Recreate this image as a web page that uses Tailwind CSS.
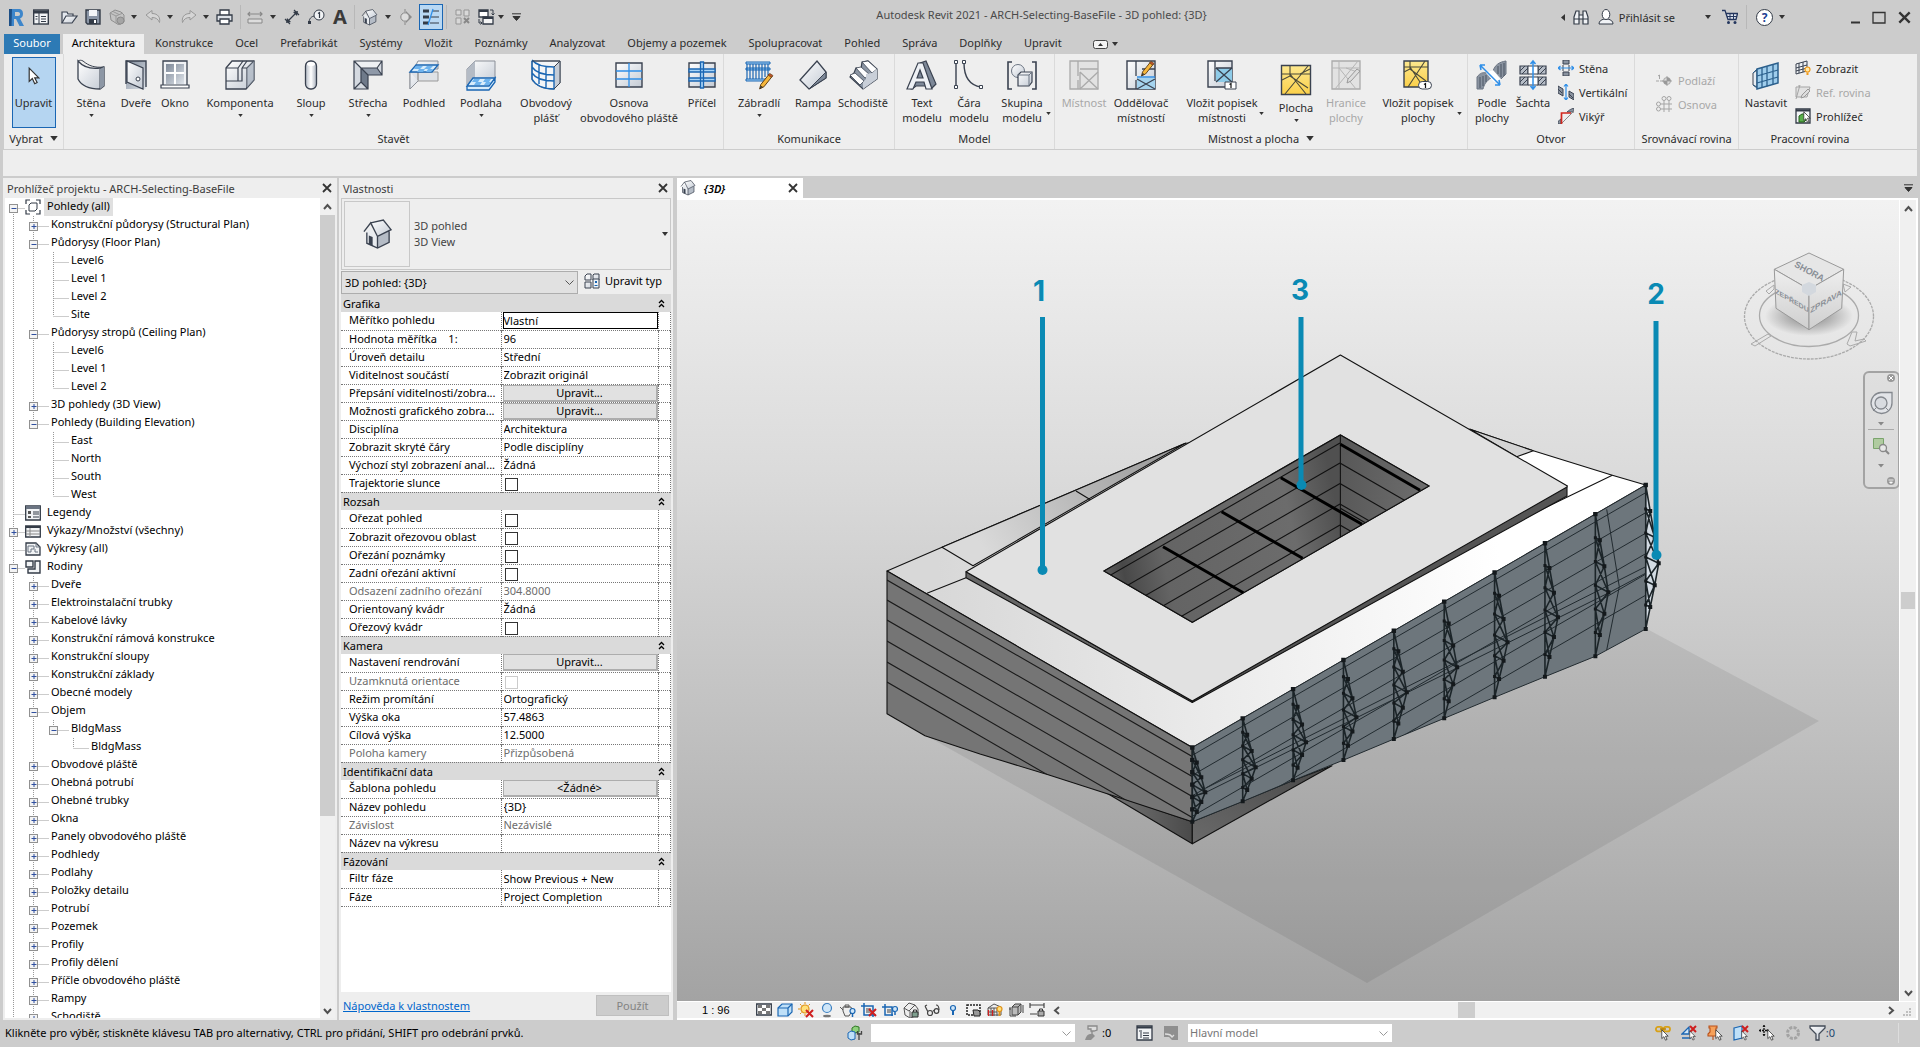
<!DOCTYPE html>
<html lang="cs">
<head>
  <meta charset="UTF-8" />
  <meta name="viewport" content="width=device-width, initial-scale=1.0"/>
  <title>Autodesk Revit 2021</title>
  <script src="https://cdn.jsdelivr.net/npm/@tailwindcss/browser@4"></script>
</head>
<body class="h-screen flex flex-col overflow-hidden bg-[#cccccc] text-[#2b2b2b] text-[11px] leading-[15px] font-['Noto_Sans','Open_Sans',sans-serif]">

<!-- Shared gradients and small glyphs -->
<svg class="absolute w-0 h-0" aria-hidden="true">
  <defs>
    <linearGradient id="light" x1="0" y1="0" x2="1" y2="1"><stop offset="0" stop-color="#fff"/><stop offset="1" stop-color="#c3cad4"/></linearGradient>
    <linearGradient id="steel" x1="0" y1="0" x2="1" y2="1"><stop offset="0" stop-color="#7d8898"/><stop offset="1" stop-color="#dfe4ea"/></linearGradient>
    <linearGradient id="tube" x1="0" y1="0" x2="1" y2="0"><stop offset="0" stop-color="#b4bbc6"/><stop offset=".5" stop-color="#fff"/><stop offset="1" stop-color="#a9b1bd"/></linearGradient>
    <linearGradient id="yellow" x1="0" y1="0" x2="0" y2="1"><stop offset="0" stop-color="#fde88f"/><stop offset="1" stop-color="#fbd04a"/></linearGradient>
    <symbol id="down" viewBox="0 0 6 4"><path d="M0 0h6L3 4z" fill="#333"/></symbol>
    <symbol id="cross" viewBox="0 0 10 10"><path d="M1 1l8 8M9 1l-8 8" stroke="#333" stroke-width="1.8"/></symbol>
    <symbol id="pointer" viewBox="0 0 10 15"><path d="M1 1v11l2.600-2.400L5.600 14l2-1-2-4H9z" fill="#fff" stroke="#333"/></symbol>
    <symbol id="pencil" viewBox="0 0 14 16"><path d="M1 15l1-4 8-10 3 2-8 10z" fill="#f6b73c" stroke="#5a3a10" stroke-width=".9"/><path d="M9 2l3 2 1.500-1.700L10.500 .4z" fill="#c2542d" stroke="#5a3a10" stroke-width=".6"/><path d="M1 15l1-3 2 1z" fill="#333"/></symbol>
    <symbol id="house" viewBox="0 0 32 32"><path d="M5 13v12l11 5V18L8 9z" fill="#e9ecf0"/><path d="M16 18v12l12-6V12z" fill="#b5bcc6"/><path d="M9 4l13-3 8 10-14 7z" fill="url(#light)"/><path d="M2 13l7-9 7 14 14-7-8-10L9 4M5 14v11l11 5 12-6V13M16 18v12" fill="none" stroke="#3a4250" stroke-width="1.400"/><path d="M7 26v-9l4 1.500V28z" fill="#3a4250"/></symbol>
  </defs>
</svg>

<!-- Title bar -->
<header class="h-[34px] shrink-0 flex items-center pl-[9px] pr-[9px] relative">
  <div class="flex items-center">
    <svg class="w-4 h-[19px]" viewBox="0 0 16 19"><path d="M0 1h4v17H0z" fill="#1d4f86"/><path d="M3 1h6c4 0 5 2 5 5s-2 4-3 4.500L15 18h-4.500L7 11H5v7H2.500z" fill="#3d86cb"/><path d="M6 4h3c1.500 0 2 1 2 2s-.5 2-2 2H6z" fill="#ccc"/></svg>
    <button class="ml-2" aria-label="Vlastnosti"><svg class="w-4 h-4" viewBox="0 0 16 16"><rect x=".7" y="1" width="14.600" height="14" fill="#f2f4f6" stroke="#333b47" stroke-width="1.400"/><path d="M1 3h14" stroke="#333b47" stroke-width="3"/><path d="M6 4v11M8 7.500h5M8 10h5M8 12.500h5M2.500 7.500h2M2.500 10h2" stroke="#333b47"/></svg></button>
    <button class="ml-3" aria-label="Otevřít"><svg class="w-[17px] h-4" viewBox="0 0 17 16"><path d="M1 14V3h5l1 2h5v2" fill="#e4e8ee" stroke="#3a4250" stroke-width="1.200"/><path d="M1 14l4-7h11l-5 7z" fill="url(#light)" stroke="#3a4250" stroke-width="1.200"/></svg></button>
    <button class="ml-[7px]" aria-label="Uložit"><svg class="w-4 h-4" viewBox="0 0 16 16"><path d="M1 1h14v14H2.500L1 13.500z" fill="#8a95a6" stroke="#333b47" stroke-width="1.400"/><path d="M4 1h8v6H4z" fill="#f3f5f8"/><path d="M4 10h8v5H4z" fill="#333b47"/><path d="M9 11h2v3H9z" fill="#fff"/></svg></button>
    <button class="ml-2" aria-label="Synchronizovat"><svg class="w-4 h-4" viewBox="0 0 16 16"><path d="M1 4l5-3 6 2 3 3v7l-5 3-8-5z" fill="#c3c3c3" stroke="#8e8e8e"/><path d="M1 4l6 3v7M7 7l7-3M4 2.500l6 3" stroke="#999" fill="none"/><circle cx="11.500" cy="11.500" r="3.500" fill="#a5a5a5" stroke="#8a8a8a"/></svg></button>
    <svg class="ml-[6px] w-[6px] h-1"><use href="#down"/></svg>
    <button class="ml-2" aria-label="Zpět"><svg class="w-4 h-4" viewBox="0 0 16 16"><path d="M1 6l6-4.500V4.500c6 0 8.500 4 7.500 9C13 10 11 8.500 7 8.500v2.500z" fill="#d5d5d5" stroke="#999"/></svg></button>
    <svg class="ml-[6px] w-[6px] h-1"><use href="#down"/></svg>
    <button class="ml-2" aria-label="Znovu"><svg class="w-4 h-4" viewBox="0 0 16 16"><path d="M15 6L9 1.500V4.500C3 4.500 .5 8.500 1.500 13.500 3 10 5 8.500 9 8.500V11z" fill="#d5d5d5" stroke="#999"/></svg></button>
    <svg class="ml-[6px] w-[6px] h-1"><use href="#down"/></svg>
    <button class="ml-[7px]" aria-label="Tisk"><svg class="w-[17px] h-4" viewBox="0 0 17 16"><path d="M4 1h9v6H4z" fill="#fff" stroke="#333b47" stroke-width="1.300"/><path d="M1 6h15v6H1z" fill="#dde1e7" stroke="#333b47" stroke-width="1.300"/><path d="M4 10h9v5H4z" fill="#fff" stroke="#333b47" stroke-width="1.300"/></svg></button>
    <span class="ml-[7px] w-px h-6 bg-[#b8b8b8]"></span>
    <button class="ml-[6px]" aria-label="Měřit"><svg class="w-4 h-4" viewBox="0 0 16 16"><path d="M1 5h14M3 3L1 5l2 2M13 3l2 2-2 2" fill="none" stroke="#888" stroke-width="1.200"/><path d="M1 10h14v4H1z" fill="#ddd" stroke="#888"/></svg></button>
    <svg class="ml-[7px] w-[6px] h-1"><use href="#down"/></svg>
    <button class="ml-2" aria-label="Kóta"><svg class="w-4 h-4" viewBox="0 0 16 16"><path d="M3 13L13 3M1 10l5 5M10 1l5 5" stroke="#333b47" stroke-width="1.200"/><path d="M2 14l1-5 4 4zM14 2l-5 1 4 4z" fill="#333b47"/></svg></button>
    <button class="ml-2" aria-label="Popisek"><svg class="w-[17px] h-4" viewBox="0 0 17 16"><path d="M1 14c0-3 1-6 5-7" fill="none" stroke="#333b47"/><path d="M0 12h3v3H0z" fill="#333b47"/><circle cx="11" cy="6" r="5" fill="#f2f4f6" stroke="#333b47"/><path d="M10 4.500l1.500-1V9" fill="none" stroke="#333b47" stroke-width="1.200"/></svg></button>
    <button class="ml-2 w-[14px] text-[20px] leading-[20px] font-bold text-[#3a3a3a]">A</button>
    <span class="ml-[7px] w-px h-6 bg-[#b8b8b8]"></span>
    <button class="ml-[6px]" aria-label="Výchozí 3D pohled"><svg class="w-[17px] h-[17px]"><use href="#house"/></svg></button>
    <svg class="ml-[7px] w-[6px] h-1"><use href="#down"/></svg>
    <button class="ml-2" aria-label="Řez"><svg class="w-[14px] h-4" viewBox="0 0 14 16"><path d="M7 2l6 6-6 6z" fill="#8b8b8b"/><circle cx="6" cy="8" r="4.200" fill="#ddd" stroke="#888"/><path d="M6 0v3M6 13v3" stroke="#888"/></svg></button>
    <button class="ml-[6px] w-6 h-[26px] bg-[#b9d8f3] border border-[#1a66b3] flex items-center justify-center" aria-label="Tenké čáry"><svg class="w-[18px] h-[18px]" viewBox="0 0 18 18"><path d="M1 3h6M1 9h6M1 15h6" stroke="#333b47" stroke-width="3"/><path d="M10 3h7M9 9h8M8 15h9" stroke="#333b47"/><path d="M11 1L6 17" stroke="#2f8fe8" stroke-width="1.300"/></svg></button>
    <span class="ml-[3px] w-px h-6 bg-[#b8b8b8]"></span>
    <button class="ml-2" aria-label="Zavřít neaktivní"><svg class="w-4 h-4" viewBox="0 0 16 16"><path d="M1 1h5v5H1zM9 1h5v6H9zM1 9h5v6H1z" fill="#d8d8d8" stroke="#959595"/><path d="M9 9l5 5M14 9l-5 5" stroke="#888" stroke-width="2"/></svg></button>
    <button class="ml-[6px]" aria-label="Přepnout okna"><svg class="w-[18px] h-[18px]" viewBox="0 0 18 18"><path d="M2 2h9v7H2z" fill="#fff" stroke="#333b47" stroke-width="1.300"/><path d="M6 9h10v7H6z" fill="#f4f4f4" stroke="#333b47" stroke-width="1.300"/><path d="M6 10h10M2 3h9" stroke="#333b47" stroke-width="2"/><path d="M13 2h3v5M14.500 5.500L16 7l1.500-1.500M2 11v4h3M3.500 13.500L5 15l-1.500 1.500" fill="none" stroke="#333b47"/></svg></button>
    <svg class="ml-[3px] w-[6px] h-1"><use href="#down"/></svg>
    <svg class="ml-[8px] w-[9px] h-2" viewBox="0 0 9 8"><path d="M0 .8h9M1 3.500h7L4.500 7.500z" fill="#333" stroke="#333"/></svg>
  </div>
  <h1 class="absolute inset-x-0 top-[7px] pl-[163px] text-center whitespace-nowrap text-[#4a4a4a]">Autodesk Revit 2021 - ARCH-Selecting-BaseFile - 3D pohled: {3D}</h1>
  <div class="relative flex items-center ml-auto">
    <svg class="w-1 h-[7px]" viewBox="0 0 4 7"><path d="M4 0v7L0 3.500z" fill="#333"/></svg>
    <button class="ml-2" aria-label="Hledat"><svg class="w-4 h-4" viewBox="0 0 16 16"><path d="M1 8l2-6h3v13H1zM15 8l-2-6h-3v13h5zM6 6h4v4H6z" fill="#f0f2f5" stroke="#333b47" stroke-width="1.200"/><path d="M1 10h5M10 10h5" stroke="#333b47"/></svg></button>
    <button class="ml-[9px] flex items-center gap-[5px]"><svg class="w-4 h-4" viewBox="0 0 16 16"><path d="M1 15c0-3 2-4 5-5h4c3 1 5 2 5 5z" fill="#f0f2f5" stroke="#333b47"/><ellipse cx="8" cy="5.500" rx="3.800" ry="5" fill="#fff" stroke="#333b47"/></svg>Přihlásit se</button>
    <svg class="ml-[30px] w-[6px] h-1"><use href="#down"/></svg>
    <button class="ml-[10px]" aria-label="Obchod"><svg class="w-[17px] h-4" viewBox="0 0 17 16"><path d="M1 1.500h3l3 9h8l1.500-6H5" fill="#dfe5ef" stroke="#24365e" stroke-width="1.300"/><path d="M6 7.500h10M9 5v5M12.500 5v5" stroke="#24365e"/><circle cx="7.500" cy="13.500" r="1.500" fill="#24365e"/><circle cx="14" cy="13.500" r="1.500" fill="#24365e"/></svg></button>
    <span class="ml-2 w-px h-6 bg-[#b8b8b8]"></span>
    <button class="ml-[9px] w-[17px] h-[17px] rounded-full border border-[#333b47] bg-white text-[#1c3f94] font-bold text-[12px] leading-[15px]">?</button>
    <svg class="ml-[6px] w-[6px] h-1"><use href="#down"/></svg>
    <button class="ml-[66px]" aria-label="Minimalizovat"><svg class="w-[9px] h-[13px]" viewBox="0 0 9 13"><path d="M0 11.500h9" stroke="#333" stroke-width="2"/></svg></button>
    <button class="ml-3" aria-label="Maximalizovat"><svg class="w-[14px] h-[13px]" viewBox="0 0 14 13"><path d="M1 1.500h12v10.500H1z" fill="none" stroke="#333" stroke-width="1.300"/></svg></button>
    <button class="ml-3" aria-label="Zavřít"><svg class="w-[13px] h-[13px]"><use href="#cross"/></svg></button>
  </div>
</header>

<!-- Ribbon tabs -->
<nav class="h-5 shrink-0 flex items-stretch pl-1 leading-[18px] whitespace-nowrap">
  <button class="w-14 pb-[2px] bg-[#2d7ab5] text-white">Soubor</button>
  <button class="ml-[3px] w-[81px] pb-[2px] bg-[#eeeeee] text-black">Architektura</button>
  <button class="px-[11px] pb-[2px]">Konstrukce</button>
  <button class="px-[11px] pb-[2px]">Ocel</button>
  <button class="px-[11px] pb-[2px]">Prefabrikát</button>
  <button class="px-[11px] pb-[2px]">Systémy</button>
  <button class="px-[11px] pb-[2px]">Vložit</button>
  <button class="px-[11px] pb-[2px]">Poznámky</button>
  <button class="px-[11px] pb-[2px]">Analyzovat</button>
  <button class="px-[11px] pb-[2px]">Objemy a pozemek</button>
  <button class="px-[11px] pb-[2px]">Spolupracovat</button>
  <button class="px-[11px] pb-[2px]">Pohled</button>
  <button class="px-[11px] pb-[2px]">Správa</button>
  <button class="px-[11px] pb-[2px]">Doplňky</button>
  <button class="px-[11px] pb-[2px]">Upravit</button>
  <button class="ml-5 flex items-center gap-1" aria-label="Minimalizovat pás karet"><svg class="w-[15px] h-[9px]" viewBox="0 0 15 9"><rect x=".5" y=".5" width="14" height="8" rx="2" fill="#f4f4f4" stroke="#444"/><path d="M5 6h5L7.500 3z" fill="#333"/></svg><svg class="w-[6px] h-1"><use href="#down"/></svg></button>
</nav>

<!-- Ribbon -->
<section class="h-[95px] shrink-0 ml-1 mr-[3px] bg-[#eeeeee] flex whitespace-nowrap">
  <div class="w-[60px] flex flex-col items-center border-r border-[#dadada]">
    <button class="mt-[3px] w-11 h-[71px] flex flex-col items-center bg-[#b5d5f1] border border-[#1a66b3]">
      <svg class="mt-2 w-3 h-5"><use href="#pointer"/></svg>
      <span class="mt-[9px]">Upravit</span>
    </button>
    <div class="mt-auto pb-[3px] flex items-center gap-[7px]">Vybrat <svg class="w-2 h-[5px]"><use href="#down"/></svg></div>
  </div>

  <div class="w-[660px] flex flex-col border-r border-[#dadada]">
    <div class="flex pl-1 pt-[5px]">
      <button class="w-[46px] flex flex-col items-center gap-1">
        <svg class="w-8 h-8" viewBox="0 0 32 32"><path d="M3 2c6 7 14 8 22 7l4-1v19l-4 3C14 30 6 26 3 20z" fill="url(#light)" stroke="#3a4250" stroke-width="1.300"/><path d="M3 2c2-1 3-1 5 0 6 5 12 7 21 6l-4 2v20" fill="none" stroke="#3a4250"/><path d="M25 10l4-2v19l-4 3z" fill="#8d97a5"/></svg>
        <span>Stěna</span><svg class="w-[5px] h-[3px]"><use href="#down"/></svg>
      </button>
      <button class="w-11 flex flex-col items-center gap-1">
        <svg class="w-8 h-8" viewBox="0 0 32 32"><path d="M6 2h20v28H6z" fill="url(#steel)"/><path d="M6 25V2h20v26" fill="none" stroke="#3a4250" stroke-width="1.400"/><path d="M7 2l16 7v21L7 23z" fill="url(#light)" stroke="#3a4250" stroke-width="1.200"/><circle cx="18" cy="20" r="2" fill="#fff" stroke="#3a4250"/></svg>
        <span>Dveře</span>
      </button>
      <button class="w-[34px] flex flex-col items-center gap-1">
        <svg class="w-8 h-8" viewBox="0 0 32 32"><path d="M4 2h24v25H4z" fill="#f0f2f5" stroke="#3a4250" stroke-width="1.300"/><path d="M7 5h18v20H7z" fill="url(#steel)"/><path d="M16 4v22M7 14h18" stroke="#fff" stroke-width="2"/><path d="M2 26h28v3H2z" fill="#fff" stroke="#3a4250" stroke-width="1.200"/></svg>
        <span>Okno</span>
      </button>
      <button class="w-[96px] flex flex-col items-center gap-1">
        <svg class="w-8 h-8" viewBox="0 0 32 32"><path d="M2 9l6-7h22v19l-8 9H2z" fill="url(#light)" stroke="#3a4250" stroke-width="1.300"/><path d="M2 9h12v13H2M14 9l5-7M18 9l5-7M18 9v13h-4M18 9h5v20M23 9l7-7" fill="none" stroke="#3a4250" stroke-width="1.200"/><path d="M23 9l7-7v19l-7 8z" fill="#a4adba" opacity=".6"/></svg>
        <span>Komponenta</span><svg class="w-[5px] h-[3px]"><use href="#down"/></svg>
      </button>
      <button class="w-[46px] flex flex-col items-center gap-1">
        <svg class="w-8 h-8" viewBox="0 0 32 32"><rect x="10.500" y="2" width="11" height="28" rx="5" fill="url(#tube)" stroke="#3a4250" stroke-width="1.300"/><ellipse cx="16" cy="5" rx="4" ry="2" fill="#fff"/></svg>
        <span>Sloup</span><svg class="w-[5px] h-[3px]"><use href="#down"/></svg>
      </button>
      <button class="w-[68px] flex flex-col items-center gap-1">
        <svg class="w-8 h-8" viewBox="0 0 32 32"><path d="M2 2h28v14H16v14H2z" fill="#d4d9e0"/><path d="M2 2l7 7h16l5-7z" fill="#eef0f3"/><path d="M9 9h16l5 7H16z" fill="#8f99a8"/><path d="M9 9v14l7 7V16z" fill="#6f7a8a"/><path d="M2 2h28v14H16v14H2zM2 2l14 14M9 9h16l5-7M25 9l5 7M9 9v14l-7 7M9 23l7 7" fill="none" stroke="#3a4250" stroke-width="1.200"/></svg>
        <span>Střecha</span><svg class="w-[5px] h-[3px]"><use href="#down"/></svg>
      </button>
      <button class="w-11 flex flex-col items-center gap-1">
        <svg class="w-8 h-8" viewBox="0 0 32 32"><path d="M2 13v17l8-8V13zM10 13h20v9H10z" fill="#dfe2e6" stroke="#999"/><path d="M2 13v17l8-8M10 2h20v8H6z" fill="url(#light)" stroke="#8a8f98"/><path d="M2 13l6-7h22l-6 7z" fill="#d8ecfb" stroke="#1a66b3" stroke-width="1.300"/><path d="M8 7h7l-3 3H6zM19 7h6l-3 3h-6zM11 10h6l-2 3H9zM20 10h5l-2 3h-5z" fill="#6db3ee"/></svg>
        <span>Podhled</span>
      </button>
      <button class="w-[70px] flex flex-col items-center gap-1">
        <svg class="w-8 h-8" viewBox="0 0 32 32"><path d="M2 26V10l8-8h20v18l-6 6z" fill="url(#light)" stroke="#8a8f98"/><path d="M2 26V10l8-8v17z" fill="#b4bbc5"/><path d="M2 27l6-8h22l-6 8zv4h22l6-8v-4l-6 8" fill="#d8ecfb" stroke="#1a66b3" stroke-width="1.300"/><path d="M9 20h6l-2 3H7zM20 20h6l-2 3h-6zM11 23h6l-2 3H9zM21 23h5l-2 3h-5z" fill="#6db3ee"/></svg>
        <span>Podlaha</span><svg class="w-[5px] h-[3px]"><use href="#down"/></svg>
      </button>
      <button class="w-[60px] flex flex-col items-center gap-1">
        <svg class="w-8 h-8" viewBox="0 0 32 32"><path d="M2 2h28v22l-6 6C14 30 6 27 2 21z" fill="#f3f5f7" stroke="#555e6c"/><path d="M24 8l6-6v22l-6 6z" fill="#c5ccd6"/><path d="M2 2v18c4 7 12 10 22 10V8C14 8 6 6 2 1M2 8c4 6 12 8 22 8M2 14c4 6 12 8 22 8M9 6v19M16 7.500v21" fill="none" stroke="#1a66b3" stroke-width="1.400"/><path d="M24 8l6-6v22l-6 6M2 2h28" fill="none" stroke="#3a4250"/></svg>
        <span class="text-center">Obvodový<br>plášť</span>
      </button>
      <button class="w-[106px] flex flex-col items-center gap-1">
        <svg class="w-8 h-8" viewBox="0 0 32 32"><path d="M3 4h26v24H3z" fill="url(#light)" stroke="#3a4250" stroke-width="1.400"/><path d="M3 12h26M3 20h26M16 4v24" stroke="#2f8fe8" stroke-width="1.300"/></svg>
        <span class="text-center">Osnova<br>obvodového pláště</span>
      </button>
      <button class="w-10 flex flex-col items-center gap-1">
        <svg class="w-8 h-8" viewBox="0 0 32 32"><path d="M3 4h26v24H3z" fill="url(#light)" stroke="#3a4250" stroke-width="1.400"/><path d="M3 10h26v3H3zM3 19h26v3H3zM14.500 3h3v26h-3z" fill="#a8d4f7" stroke="#1a66b3" stroke-width="1.300"/></svg>
        <span>Příčel</span>
      </button>
    </div>
    <div class="mt-auto pb-[3px] text-center">Stavět</div>
  </div>

  <div class="w-[171px] flex flex-col border-r border-[#dadada]">
    <div class="flex pl-[5px] pt-[5px]">
      <button class="w-[60px] flex flex-col items-center gap-1">
        <svg class="w-8 h-8" viewBox="0 0 32 32"><path d="M3 3h24v2H3zM3 9h24v2H3zM3 20h20v2H3z" fill="#a8d4f7" stroke="#1a66b3"/><path d="M4 5v15M7 5v15M10 5v15M13 5v15M16 5v15M19 5v15M22 5v13M25 5v11" stroke="#1a66b3" stroke-width="1.200"/><use href="#pencil" x="15" y="14" width="16" height="17"/></svg>
        <span>Zábradlí</span><svg class="w-[5px] h-[3px]"><use href="#down"/></svg>
      </button>
      <button class="w-12 flex flex-col items-center gap-1">
        <svg class="w-8 h-8" viewBox="0 0 32 32"><path d="M3 21L20 2l9 11v6L12 30z" fill="url(#light)" stroke="#3a4250" stroke-width="1.300"/><path d="M12 30l17-17v6z" fill="#7d8898" stroke="#3a4250"/></svg>
        <span>Rampa</span>
      </button>
      <button class="w-[52px] flex flex-col items-center gap-1">
        <svg class="w-8 h-8" viewBox="0 0 32 32"><path d="M15 3l6-1 9 8v10L16 30 3 18l4-4 2-5 5 1z" fill="#8d97a5" stroke="#3a4250" stroke-width="1.200"/><path d="M15 3l6-1 9 8-5 4zM9 9l5-1 9 8-5 3zM3 16l5-2 9 8-4 4z" fill="#fff" stroke="#3a4250" stroke-width=".8"/><path d="M25 14l5-4v10L16 30v-7l3-3v-5z" fill="#c9cfd8"/></svg>
        <span>Schodiště</span>
      </button>
    </div>
    <div class="mt-auto pb-[3px] text-center">Komunikace</div>
  </div>

  <div class="w-[160px] flex flex-col border-r border-[#dadada]">
    <div class="flex pl-1 pt-[5px]">
      <button class="w-[46px] flex flex-col items-center gap-1">
        <svg class="w-8 h-8" viewBox="0 0 32 32"><path d="M14 4l6-2 10 23-4 4-6-2-10 0-4 3-4-1z" fill="#7d8898" stroke="#3a4250" stroke-width="1.200"/><path d="M12 4h5l9 26h-6l-2-7h-8l-3 7H1zM14 11l-3 8h6z" fill="#eef1f5" stroke="#3a4250" stroke-width="1.200" fill-rule="evenodd"/></svg>
        <span class="text-center">Text<br>modelu</span>
      </button>
      <button class="w-12 flex flex-col items-center gap-1">
        <svg class="w-8 h-8" viewBox="0 0 32 32"><path d="M3 4v24M11 4c0 12 4 22 17 24" fill="none" stroke="#3a4250" stroke-width="1.400"/><path d="M1.500 1.500h3v3h-3zM1.500 26.500h3v3h-3zM9.500 1.500h3v3h-3zM26.500 26.500h3v3h-3z" fill="#fff" stroke="#3a4250"/></svg>
        <span class="text-center">Čára<br>modelu</span>
      </button>
      <button class="relative w-[58px] flex flex-col items-center gap-1">
        <svg class="w-8 h-8" viewBox="0 0 32 32"><path d="M6 3H2v27h4M26 3h4v27h-4" fill="none" stroke="#3a4250" stroke-width="1.600"/><circle cx="12" cy="12" r="6.500" fill="url(#light)" stroke="#6b7482"/><path d="M12 16l3-3h11v10l-3 4H12z" fill="url(#light)" stroke="#3a4250" stroke-width="1.200"/><path d="M12 16h11v11M23 16l3-3" fill="none" stroke="#6b7482"/></svg>
        <span class="text-center">Skupina<br>modelu</span><svg class="absolute right-0 bottom-[10px] w-[5px] h-[3px]"><use href="#down"/></svg>
      </button>
    </div>
    <div class="mt-auto pb-[3px] text-center">Model</div>
  </div>

  <div class="w-[413px] flex flex-col border-r border-[#dadada]">
    <div class="flex pl-[6px] pt-[5px]">
      <button class="w-[46px] flex flex-col items-center gap-1 text-[#a8a8a8]" disabled>
        <svg class="w-8 h-8" viewBox="0 0 32 32"><path d="M2 2h28v28H2z" fill="#e2e2e2" stroke="#aaa" stroke-width="1.300"/><path d="M10 2v15M10 21v9M12 10h18M12 13v17M12 13l18 17M30 13L12 30" fill="none" stroke="#aaa" stroke-width="1.300"/></svg>
        <span>Místnost</span>
      </button>
      <button class="w-[68px] flex flex-col items-center gap-1">
        <svg class="w-8 h-8" viewBox="0 0 32 32"><path d="M2 2h28v28H2z" fill="url(#light)" stroke="#3a4250" stroke-width="1.400"/><path d="M12 19h18v11H12z" fill="#a5d3ee"/><path d="M11 2v15M11 21v9M12 20l18 10M30 20L12 30M17 10h13" fill="none" stroke="#3a4250" stroke-width="1.300"/><path d="M12 18h18" stroke="#2f8fe8" stroke-width="1.500"/><use href="#pencil" x="15" y="2" width="15" height="16"/></svg>
        <span class="text-center">Oddělovač<br>místností</span>
      </button>
      <button class="relative w-[94px] flex flex-col items-center gap-1">
        <svg class="w-8 h-8" viewBox="0 0 32 32"><path d="M2 2h24v26H2z" fill="url(#light)" stroke="#3a4250" stroke-width="1.400"/><path d="M10 9h16v14H10z" fill="#8ecbe8"/><path d="M9 2v20M10 9h16M10 9l16 14M26 9L10 23" fill="none" stroke="#3a4250" stroke-width="1.300"/><path d="M19 23h11v7H19z" fill="#fff" stroke="#3a4250"/><path d="M23.500 25.500l1.500-1V29" fill="none" stroke="#111" stroke-width="1.200"/></svg>
        <span class="text-center">Vložit popisek<br>místnosti</span><svg class="absolute right-[5px] bottom-[10px] w-[5px] h-[3px]"><use href="#down"/></svg>
      </button>
      <button class="w-[54px] flex flex-col items-center gap-1 pt-[5px]">
        <svg class="w-8 h-8" viewBox="0 0 32 32"><path d="M1.500 1.500h29v29h-29z" fill="url(#yellow)" stroke="#3a4250" stroke-width="1.400"/><path d="M10 2v10L2 16M2 10h28M10 10l16 20M28 2L5 30M20 10l10-5M10 12l18 12" fill="none" stroke="#4a4a3a" stroke-width="1.100"/></svg>
        <span>Plocha</span><svg class="w-[5px] h-[3px]"><use href="#down"/></svg>
      </button>
      <button class="w-[46px] flex flex-col items-center gap-1 text-[#a8a8a8]" disabled>
        <svg class="w-8 h-8" viewBox="0 0 32 32"><path d="M2 2h28v28H2z" fill="#e2e2e2" stroke="#aaa" stroke-width="1.300"/><path d="M9 2v28M2 9h28M9 9l17 21M28 2L5 30M30 14L16 9" fill="none" stroke="#b5b5b5"/><path d="M17 24l1-4 9-10 3 2-9 10z" fill="#ddd" stroke="#999"/></svg>
        <span class="text-center">Hranice<br>plochy</span>
      </button>
      <button class="relative w-[98px] flex flex-col items-center gap-1">
        <svg class="w-8 h-8" viewBox="0 0 32 32"><path d="M2 2h24v26H2z" fill="url(#yellow)" stroke="#3a4250" stroke-width="1.400"/><path d="M8 2v8L2 13M2 8h24M8 8l12 18M23 2L6 28M8 10l16 12" fill="none" stroke="#4a4a3a" stroke-width="1.100"/><rect x="16.500" y="22.500" width="13" height="7.500" rx="3.700" fill="#fff" stroke="#3a4250"/><path d="M22 25.500l1.500-1V29" fill="none" stroke="#111" stroke-width="1.200"/></svg>
        <span class="text-center">Vložit popisek<br>plochy</span><svg class="absolute right-[5px] bottom-[10px] w-[5px] h-[3px]"><use href="#down"/></svg>
      </button>
    </div>
    <div class="mt-auto pb-[3px] flex items-center justify-center gap-[7px]">Místnost a plocha <svg class="w-2 h-[5px]"><use href="#down"/></svg></div>
  </div>

  <div class="w-[167px] flex flex-col border-r border-[#dadada]">
    <div class="flex pl-[3px] pt-[5px]">
      <button class="w-[42px] flex flex-col items-center gap-1">
        <svg class="w-8 h-8" viewBox="0 0 32 32"><path d="M17 12c2-6 6-9 13-10v13l-5 5zM1 30V18c3-4 6-5 9-4l5 5c-5 3-7 7-8 11z" fill="#8a93a0" stroke="#6b7482"/><path d="M10 14l7-3 8 9-7 3z" fill="#fff"/><path d="M4 18v11M7 17v10M10 16v7M22 7v8M25 5v13M28 4v13" stroke="#4b5563"/><path d="M4 6l20 20M4 6l1 5M4 6h5M24 26l-1-5M24 26h-5" fill="none" stroke="#2f8fe8" stroke-width="1.500"/></svg>
        <span class="text-center">Podle<br>plochy</span>
      </button>
      <button class="w-10 flex flex-col items-center gap-1">
        <svg class="w-8 h-8" viewBox="0 0 32 32"><path d="M3 7h8v8H3zM3 18h8v8H3zM21 7h8v8h-8zM21 18h8v8h-8z" fill="#b5bcc6" stroke="#3a4250" stroke-width="1.200"/><path d="M3 12l5-5M5 15l6-6M3 23l5-5M5 26l6-6M21 12l5-5M23 15l6-6M21 23l5-5M23 26l6-6" stroke="#3a4250"/><path d="M11 7h10v8H11zM11 18h10v8H11z" fill="#fff" stroke="#3a4250"/><path d="M16 2v28M13.500 5L16 2l2.500 3M13.500 27l2.500 3 2.500-3" fill="none" stroke="#2f8fe8" stroke-width="1.500"/></svg>
        <span>Šachta</span>
      </button>
      <div class="ml-[5px] flex flex-col gap-2 pt-px">
        <button class="h-4 flex items-center gap-[5px]"><svg class="w-4 h-4" viewBox="0 0 16 16"><path d="M5 0h6v4H5zM5 12h6v4H5z" fill="#8a93a0" stroke="#3a4250"/><path d="M5 5v6M11 5v6" stroke="#3a4250"/><path d="M0 8h16M2.500 6L0 8l2.500 2M13.500 6L16 8l-2.500 2" fill="none" stroke="#2f8fe8" stroke-width="1.200"/></svg>Stěna</button>
        <button class="h-4 flex items-center gap-[5px]"><svg class="w-4 h-4" viewBox="0 0 16 16"><path d="M0 2l5 3v7L0 9zM11 7l5 3v6l-5-3z" fill="#8a93a0" stroke="#3a4250"/><path d="M0 5l4 4M11 10l4 4" stroke="#3a4250"/><path d="M8 0v16M6 2.500L8 0l2 2.500M6 13.500L8 16l2-2.500" fill="none" stroke="#2f8fe8" stroke-width="1.200"/></svg>Vertikální</button>
        <button class="h-4 flex items-center gap-[5px]"><svg class="w-4 h-4" viewBox="0 0 16 16"><path d="M9 4c2-2 4-3 7-4v4zM0 16c0-3 1-4 3-5v5z" fill="#8a93a0" stroke="#3a4250" stroke-width=".8"/><path d="M16 3L3 16" stroke="#888"/><path d="M3.500 16V5H13" fill="none" stroke="#d1271e" stroke-width="1.700"/></svg>Vikýř</button>
      </div>
    </div>
    <div class="mt-auto pb-[3px] text-center">Otvor</div>
  </div>

  <div class="w-[104px] flex flex-col border-r border-[#dadada]">
    <div class="flex flex-col gap-2 pl-[21px] pt-[18px] text-[#a8a8a8]">
      <button class="h-4 flex items-center gap-[6px]" disabled><svg class="w-4 h-4" viewBox="0 0 16 16"><path d="M0 9h7" stroke="#a5a5a5" stroke-dasharray="3 1"/><path d="M2 4l1.500-1v4" fill="none" stroke="#a5a5a5"/><circle cx="11" cy="9" r="3.500" fill="#ddd" stroke="#a5a5a5"/><path d="M11 4v10M6 9h10" stroke="#a5a5a5"/><path d="M11 9h3.500A3.500 3.500 0 0 0 11 5.500zM11 9H7.500A3.500 3.500 0 0 0 11 12.500z" fill="#999"/></svg>Podlaží</button>
      <button class="h-4 flex items-center gap-[6px]" disabled><svg class="w-4 h-4" viewBox="0 0 16 16"><g fill="none" stroke="#a5a5a5"><circle cx="8" cy="2.500" r="2"/><circle cx="13" cy="2.500" r="2"/><circle cx="2.500" cy="8" r="2"/><circle cx="2.500" cy="13" r="2"/><path d="M8 4.500V16M13 4.500V16M4.500 8H16M4.500 13H16"/></g></svg>Osnova</button>
    </div>
    <div class="mt-auto pb-[3px] text-center">Srovnávací rovina</div>
  </div>

  <div class="flex-1 flex flex-col">
    <div class="flex pl-[5px] pt-[5px]">
      <button class="w-11 flex flex-col items-center gap-1">
        <svg class="w-8 h-8" viewBox="0 0 32 32"><path d="M3 14l4-3v17l-4-2z" fill="#e6edf4" stroke="#3a4250"/><path d="M7 10l21-6v20L7 30z" fill="#9fcdec" stroke="#2b5f8c" stroke-width="1.500"/><path d="M12 9v20M17 7.500v20M23 6v20M7 17l21-6M7 24l21-6" stroke="#2b5f8c" stroke-width="1.300"/><path d="M3 14l4-4M3 26l4 3" stroke="#2b5f8c"/></svg>
        <span>Nastavit</span>
      </button>
      <div class="ml-[7px] flex flex-col gap-2 pt-px">
        <button class="h-4 flex items-center gap-[5px]"><svg class="w-4 h-4" viewBox="0 0 16 16"><path d="M1 4l11-3v10L1 14zM4 3v10M8 2v10M1 8l11-3M1 11l11-3" fill="#eef1f4" stroke="#3a4250"/><circle cx="12.500" cy="9.500" r="2.500" fill="#ffe9a8" stroke="#f09a1a" stroke-width="1.200"/><path d="M11.500 12.500h2V15h-2z" fill="#f09a1a"/></svg>Zobrazit</button>
        <button class="h-4 flex items-center gap-[5px] text-[#a8a8a8]" disabled><svg class="w-4 h-4" viewBox="0 0 16 16"><path d="M4 1v2M1 3h14l-3 10H1zM5 1L1 15" fill="#e2e2e2" stroke="#a5a5a5"/><path d="M6 14l1-3 6-6 2 2-6 6z" fill="#ddd" stroke="#999"/></svg>Ref. rovina</button>
        <button class="h-4 flex items-center gap-[5px]"><svg class="w-4 h-4" viewBox="0 0 16 16"><path d="M1 1h14v14H1z" fill="#f2f4f6" stroke="#333b47" stroke-width="1.300"/><path d="M1 2.500h14" stroke="#333b47" stroke-width="2"/><path d="M4 8l3-2h4v6l-2 2H4z" fill="#59b04a" stroke="#24601b"/><use href="#pointer" x="8" y="3" width="8" height="12"/></svg>Prohlížeč</button>
      </div>
    </div>
    <div class="mt-auto pb-[3px] pr-[36px] text-center">Pracovní rovina</div>
  </div>
</section>

<!-- Options bar -->
<div class="h-[26px] shrink-0 mt-px mb-[2px] ml-[3px] mr-[3px] bg-[#eeeeee]"></div>

<main class="flex-1 min-h-0 flex pl-[3px] pr-[2px] text-black">

  <!-- Project browser -->
  <section class="w-[334px] shrink-0 flex flex-col bg-[#eeeeee] p-[2px] pt-0">
    <div class="h-5 shrink-0 flex items-center justify-between pl-[2px] pr-[3px] text-[#3c3c3c]">
      <h2>Prohlížeč projektu - ARCH-Selecting-BaseFile</h2>
      <button aria-label="Zavřít prohlížeč"><svg class="w-[10px] h-[10px]"><use href="#cross"/></svg></button>
    </div>
    <div class="flex-1 min-h-0 flex bg-white">
      <ul id="tree" class="flex-1 overflow-hidden whitespace-nowrap"></ul>
      <div class="w-[15px] flex flex-col items-center bg-[#f0f0f0]">
        <svg class="h-[17px] w-[9px] shrink-0" viewBox="0 0 9 17"><path d="M1 11l3.500-4L8 11" fill="none" stroke="#505050" stroke-width="2"/></svg>
        <div class="w-full h-[601px] bg-[#cdcdcd]"></div>
        <svg class="h-[17px] w-[9px] mt-auto shrink-0" viewBox="0 0 9 17"><path d="M1 8l3.500 4L8 8" fill="none" stroke="#505050" stroke-width="2"/></svg>
      </div>
    </div>
  </section>

  <!-- Properties palette -->
  <section class="ml-[2px] w-[334px] shrink-0 flex flex-col bg-[#eeeeee] px-[2px]">
    <div class="h-5 shrink-0 flex items-center justify-between pl-[2px] pr-[3px] text-[#3c3c3c]">
      <h2>Vlastnosti</h2>
      <button aria-label="Zavřít vlastnosti"><svg class="w-[10px] h-[10px]"><use href="#cross"/></svg></button>
    </div>
    <button class="h-[72px] shrink-0 flex items-center border border-[#c8c8c8] pl-[2px] pr-px text-left text-[#444] leading-[16px]">
      <span class="w-[66px] h-[66px] flex items-center justify-center border border-[#c8c8c8]"><svg class="w-[31px] h-[31px]"><use href="#house"/></svg></span>
      <span class="ml-1">3D pohled<br>3D View</span>
      <svg class="ml-auto w-2 h-1"><use href="#down"/></svg>
    </button>
    <div class="h-6 shrink-0 flex items-center">
      <div class="relative w-[237px] h-[23px]">
        <select aria-label="Filtr vlastností" class="appearance-none w-full h-full pl-[3px] bg-[#e1e1e1] border border-[#adadad]"><option>3D pohled: {3D}</option></select>
        <svg class="absolute right-[4px] top-[9px] w-[9px] h-[6px] pointer-events-none" viewBox="0 0 9 6"><path d="M.5 .5l4 4 4-4" fill="none" stroke="#555"/></svg>
      </div>
      <button class="ml-[6px] mb-[3px] flex items-center gap-[5px]"><svg class="w-4 h-4" viewBox="0 0 16 16"><path d="M3 1h4v6H1V3zM10 1h5v6H9V2zM1 9h6v6H1z" fill="url(#light)" stroke="#3a4250"/><path d="M9 6h6v9H9z" fill="#eef3f8" stroke="#3a4250"/><path d="M11 8h2v2h-2z" fill="#1a66b3"/><path d="M10.500 12.500h3" stroke="#1a66b3"/></svg>Upravit typ</button>
    </div>
    <div class="flex-1 bg-white">
      <table class="w-full table-fixed border-collapse">
        <colgroup><col class="w-[160px]"><col class="w-[157px]"><col></colgroup>
        <tbody id="props"></tbody>
      </table>
    </div>
    <div class="h-[28px] shrink-0 flex items-center justify-between pb-[2px] pl-[2px] pr-[2px]">
      <a href="#" class="text-[#0066cc] underline">Nápověda k vlastnostem</a>
      <button class="w-[73px] h-[21px] bg-[#cccccc] border border-[#bfbfbf] text-[#838383]" disabled>Použít</button>
    </div>
  </section>

  <!-- View window -->
  <section class="ml-1 flex-1 min-w-0 flex flex-col">
    <div class="h-5 shrink-0 flex items-center justify-between pr-[5px]">
      <div class="w-[126px] h-full flex items-center bg-white pl-[3px] pr-[5px]">
        <svg class="w-4 h-4"><use href="#house"/></svg>
        <span class="ml-2 font-semibold italic">{3D}</span>
        <button class="ml-auto" aria-label="Zavřít pohled"><svg class="w-[10px] h-[10px]"><use href="#cross"/></svg></button>
      </div>
      <svg class="w-[9px] h-2" viewBox="0 0 9 8"><path d="M0 .8h9M1 3.500h7L4.500 7.500z" fill="#333" stroke="#333"/></svg>
    </div>
    <div class="flex-1 min-h-0 flex flex-col border-2 border-l-0 border-white bg-[#f0f0f0]">
      <div class="flex-1 min-h-0 flex">
        <div class="flex-1 min-w-0 bg-[linear-gradient(#f2f2f2,#dadada_35%,#b6b6b6_78%,#a3a3a3)]">
          <svg class="w-full h-full block" viewBox="677 200 1222 801">
            <defs>
              <linearGradient id="roof" gradientUnits="userSpaceOnUse" x1="940" y1="600" x2="1500" y2="560"><stop offset="0" stop-color="#d8d8d8"/><stop offset=".5" stop-color="#ececec"/><stop offset="1" stop-color="#fff"/></linearGradient>
              <linearGradient id="under" x1="0" y1="0" x2="1" y2="0"><stop offset="0" stop-color="#777"/><stop offset="1" stop-color="#4a4a4a"/></linearGradient>
              <linearGradient id="under2" x1="0" y1="1" x2="1" y2="0"><stop offset="0" stop-color="#6a6a6a"/><stop offset="1" stop-color="#484848"/></linearGradient>
              <linearGradient id="back" gradientUnits="userSpaceOnUse" x1="990" y1="560" x2="1170" y2="450"><stop offset="0" stop-color="#dadada"/><stop offset="1" stop-color="#999"/></linearGradient>
              <linearGradient id="wallL" gradientUnits="userSpaceOnUse" x1="1104" y1="571" x2="1340" y2="520"><stop offset="0" stop-color="#5e5e5e"/><stop offset=".08" stop-color="#484848"/><stop offset=".25" stop-color="#646464"/><stop offset=".8" stop-color="#6c6c6c"/><stop offset="1" stop-color="#505050"/></linearGradient>
              <linearGradient id="wallR" gradientUnits="userSpaceOnUse" x1="1340" y1="480" x2="1429" y2="490"><stop offset="0" stop-color="#585858"/><stop offset="1" stop-color="#6e6e6e"/></linearGradient>
              <radialGradient id="cubeShade"><stop offset="0" stop-color="#000" stop-opacity=".45"/><stop offset="1" stop-color="#000" stop-opacity="0"/></radialGradient>
              <linearGradient id="face" x1="0" y1="0" x2="0" y2="1"><stop offset="0" stop-color="#eee"/><stop offset="1" stop-color="#cfcfcf"/></linearGradient>
              <clipPath id="leftFace"><path d="M887 571L1192.300 747.500V821.700L1108 794L1049 775 980 754 925 735.700 887 713.700z"/></clipPath>
              <clipPath id="glass"><path id="glassShape" d="M1192.300 747.500L1645.700 485V629L1595.300 656.300 1545 676.700 1494.700 697.300 1444.300 718.300 1394 739 1343.700 760 1293.300 780.300 1243 801.300 1192.300 821.700z"/></clipPath>
              <clipPath id="holeL"><path d="M1104 571L1340.400 435V536.700L1192.300 622.300z"/></clipPath>
              <clipPath id="holeR"><path d="M1340.400 435L1429 486 1340.400 536.700z"/></clipPath>
            </defs>

            <!-- Ground shadow -->
            <path d="M925 735L1367 983 1819 721 1647 629 1400 700z" fill="#000" opacity=".075"/>

            <!-- Lower mass -->
            <g stroke="#111" stroke-width="1.100" stroke-linejoin="round">
              <path d="M1105 792L1192.300 821.700V843.700z" fill="url(#under)"/>
              <path d="M1192.300 821.700L1293.300 780.300 1332 765.700 1192.300 843.700z" fill="url(#under2)"/>
              <path d="M887 571L942 547.300 1185.400 443.300 1470 429.300 1533.300 450.700 1612.300 475.300 1645.700 485 1192.300 747.500z" fill="url(#roof)"/>
              <path d="M942 547.300L1185.400 443.300 973 565.700z" fill="url(#back)"/>
              <path d="M1470 429.300L1533.300 450.700 1516.700 456.700z" fill="#d4d4d4"/>
              <path d="M1076 491l14 8.500M927 593.300l39-15.600M1612.300 475.300L1526 517M1526 517l38-22" fill="none"/>
              <path d="M887 571L1192.300 747.500V821.700L1108 794L1049 775 980 754 925 735.700 887 713.700z" fill="#757575"/>
            </g>
            <g clip-path="url(#leftFace)" stroke="#1a1a1a" stroke-width="1.100">
              <path d="M887 580l306 177M887 600l306 177M887 620l306 177M887 641l306 177M887 662l306 177M887 682l306 177"/>
            </g>

            <!-- Upper slab -->
            <g stroke="#111" stroke-width="1.100" stroke-linejoin="round">
              <path d="M966 571.700L1192.300 701V702.500L966 577.700z" fill="#666"/>
              <path d="M1567 485.700V496L1192.300 702.500V701z" fill="#555"/>
              <path fill-rule="evenodd" d="M966 571.700L1340.400 355 1567 485.700V487L1192.300 701zM1104 571L1192.300 622.300 1429 486 1340.400 435z" fill="#e1e1e1"/>
            </g>

            <!-- Courtyard -->
            <path d="M1104 571L1340.400 435V536.700L1192.300 622.300z" fill="url(#wallL)"/>
            <path d="M1340.400 435L1429 486 1340.400 536.700z" fill="url(#wallR)"/>
            <g clip-path="url(#holeL)" stroke="#111" stroke-width="1.100">
              <path d="M1340 443L1090 587M1340 463L1090 607M1340 483.500L1090 627.500M1340 504L1090 648M1340 525L1090 669"/>
            </g>
            <g clip-path="url(#holeR)" stroke="#111" stroke-width="1.100">
              <path d="M1340 463l90 52M1340 483.500l90 52M1340 504l90 52M1340 525l90 52M1340 508l60 35"/>
            </g>
            <path d="M1340.400 435V536.700M1104 571L1192.300 622.300 1429 486 1340.400 435z" fill="none" stroke="#111" stroke-width="1.100"/>
            <path d="M1163 546.700l80.300 46M1221.600 511.700l81 46.600M1280.800 477.700l81.200 46.600M1340.400 444.300l79.600 46" stroke="#000" stroke-width="3"/>

            <!-- Glazed facade and trusses -->
            <path d="M1645.700 485L1658.500 563.300 1645.700 629z" fill="#d3dbe3"/>
            <use href="#glassShape" fill="#6d767c" stroke="#222b30"/>
            <g clip-path="url(#glass)" stroke="#222b30" fill="none">
              <path d="M1192 755.500l454-263M1192 775.500l454-263M1192 796l454-263M1192 816.500l454-263M1192 837l454-263M1192 858l454-263"/>
              <path d="M1206 792.300L1609 592.700 1646 573M1206 788L1657 561M1606.700 509.300l12.600 77.400-12.600 63.300"/>
            </g>
            <path id="trussLines" fill="none" stroke="#1c2529" stroke-width="1.600"/>
            <path id="trussNodes" fill="#14191c"/>

            <!-- Callouts -->
            <g stroke="#0a8ab4" stroke-width="5"><path d="M1042.500 317v253M1301 317v168M1656 321v234"/></g>
            <g fill="#0a8ab4">
              <circle cx="1042.500" cy="570" r="5"/><circle cx="1301.500" cy="485" r="5"/><circle cx="1656.500" cy="555" r="5"/>
              <g class="text-[28px] font-bold font-['Inter',sans-serif]" text-anchor="middle">
                <text x="1039" y="301">1</text><text x="1300" y="300">3</text><text x="1656" y="304">2</text>
              </g>
            </g>

            <!-- View cube -->
            <g fill="none" stroke="#aaa" stroke-width="1.300">
              <ellipse cx="1809" cy="316.500" rx="64.500" ry="42.500" stroke-dasharray="3 1"/><ellipse cx="1809" cy="315.500" rx="49.500" ry="31"/>
              <path d="M1751 344l4 2 16-10-3-2zM1852 332l-5 12 3 2 16-5-2-2-9 2 2-9zM1766 291l8-6v4l-5 5zM1843 284l8 3-6 5z" stroke-width="1"/>
            </g>
            <ellipse cx="1809" cy="316" rx="44" ry="20" fill="url(#cubeShade)"/>
            <g stroke="#999" stroke-linejoin="round">
              <path d="M1809 253L1843.700 269.300 1809 289.300 1774.300 269.300z" fill="#e6e6e6"/>
              <path d="M1774.300 269.300L1809 289.300V329.700L1776 308.300z" fill="url(#face)"/>
              <path d="M1843.700 269.300L1809 289.300V329.700L1841.700 308.300z" fill="url(#face)"/>
            </g>
            <path d="M1802 285l7-3 7 3v7l-7 4-7-4z" fill="#d3d8de"/>
            <g fill="#8a8f96" class="text-[9px] font-bold font-['Liberation_Sans',sans-serif]" text-anchor="middle">
              <text transform="translate(1808 274) rotate(28)">SHORA</text>
              <text class="text-[7px]" transform="translate(1792 303) skewY(30)">ZEPŘEDU</text>
              <text class="text-[8px]" transform="translate(1826 304) skewY(-30)">ZPRAVA</text>
            </g>

            <!-- Navigation bar -->
            <rect x="1864" y="372" width="35" height="116" rx="5" fill="#dcdcdc" fill-opacity=".6" stroke="#a3a3a3" stroke-width="2"/>
            <circle cx="1891" cy="378" r="4" fill="#999"/><path d="M1889 376l4 4M1893 376l-4 4" stroke="#fff"/>
            <path d="M1881 392.500h11V403a10.500 10.500 0 1 1-11-10.500z" fill="#e2e4e8" stroke="#84888e" stroke-width="1.300"/><circle cx="1881" cy="403" r="6" fill="#d8dbe0" stroke="#84888e" stroke-width="1.300"/><path d="M1876 408l-3 3M1886 408l3 3" stroke="#84888e"/>
            <path d="M1878 422h6l-3 3.500zM1878 464h6l-3 3.500z" fill="#888"/><path d="M1868 429.500h26" stroke="#aaa"/>
            <path d="M1873.500 438.500h10v10h-10z" fill="#b0cba0" stroke="#7aa46c"/><circle cx="1883" cy="448" r="3.500" fill="#e8e8e8" stroke="#888" stroke-width="1.300"/><path d="M1885.500 450.500l3.500 3.500" stroke="#888" stroke-width="2"/>
            <circle cx="1891" cy="481" r="4" fill="#999"/><path d="M1888.500 480h5M1889.500 482h3l-1.500 1.500z" fill="#fff" stroke="#fff" stroke-width=".8"/>
          </svg>
        </div>
        <div class="w-[17px] shrink-0 border-l border-white flex flex-col items-center justify-between">
          <svg class="h-[17px] w-[9px]" viewBox="0 0 9 17"><path d="M1 11l3.500-4L8 11" fill="none" stroke="#505050" stroke-width="2"/></svg>
          <div class="w-[14px] h-[17px] bg-[#cdcdcd]"></div>
          <svg class="h-[17px] w-[9px]" viewBox="0 0 9 17"><path d="M1 7l3.500 4L8 7" fill="none" stroke="#505050" stroke-width="2"/></svg>
        </div>
      </div>
      <!-- View control bar -->
      <div class="h-[17px] shrink-0 border-t border-white flex items-center">
        <span class="w-[79px] pl-[25px] font-['Liberation_Sans',sans-serif]">1 : 96</span>
        <div class="flex items-center gap-[5px]">
          <svg class="w-4 h-4" viewBox="0 0 16 16"><path d="M.7 2h14.600v11H.7z" fill="#fff" stroke="#333b47" stroke-width="1.300"/><path d="M2 3h4v3H2zM10 3h4v3h-4zM6 6h4v3H6zM2 9h4v3H2zM10 9h4v3h-4z" fill="#777"/></svg>
          <svg class="w-4 h-4" viewBox="0 0 16 16"><path d="M1 6l4-4h10v8l-4 4H1z" fill="#bfe0f8" stroke="#1a66b3" stroke-width="1.200"/><path d="M1 6h10v8M11 6l4-4" fill="none" stroke="#1a66b3" stroke-width="1.200"/></svg>
          <svg class="w-4 h-4" viewBox="0 0 16 16"><circle cx="7" cy="7" r="4" fill="#ffe07a" stroke="#e0921a" stroke-width="1.200"/><path d="M7 0v2M7 12v2M0 7h2M2 2l1.500 1.500M12 2l-1.500 1.500M2 12l1.500-1.500" stroke="#e0921a"/><path d="M8 8l7 7M15 8l-7 7" stroke="#cf1f1f" stroke-width="2"/></svg>
          <svg class="w-4 h-4" viewBox="0 0 16 16"><circle cx="8" cy="6" r="4.500" fill="#cfe6f8" stroke="#3b7fc0" stroke-width="1.200"/><ellipse cx="8" cy="14" rx="4" ry="1.300" fill="#777"/></svg>
          <svg class="w-4 h-4" viewBox="0 0 16 16"><path d="M0 5l3 3M3 5h8l1 4-3 5H5L3 9zM5 3h4v2H5z" fill="#eee" stroke="#555"/><circle cx="12.500" cy="9" r="2.500" fill="#cfe6f8" stroke="#1a66b3" stroke-width="1.200"/><path d="M12.500 12v3" stroke="#1a66b3" stroke-width="1.500"/></svg>
          <svg class="w-4 h-4" viewBox="0 0 16 16"><path d="M3 1v12h12M0 4h12v11" fill="none" stroke="#1a66b3" stroke-width="1.500"/><path d="M5 6h5v5H5z" fill="#999"/><path d="M8 7l7 7M15 7l-7 7" stroke="#cf1f1f" stroke-width="2"/></svg>
          <svg class="w-4 h-4" viewBox="0 0 16 16"><path d="M3 2v11h8M0 5h10v9" fill="none" stroke="#1a66b3" stroke-width="1.500"/><path d="M5 7h4v4H5z" fill="#999"/><circle cx="13" cy="7" r="2.500" fill="#cfe6f8" stroke="#1a66b3" stroke-width="1.200"/><path d="M13 10v3" stroke="#1a66b3" stroke-width="1.500"/></svg>
          <svg class="w-4 h-4" viewBox="0 0 16 16"><path d="M1 6l5-5 6 2 3 4v6l-8 3-5-3z" fill="#eee" stroke="#555"/><path d="M1 6l5 3 6-6M7 9v6" fill="none" stroke="#555"/><path d="M9 10h6v5H9z" fill="#7fa08f" stroke="#333"/><path d="M10.500 10V8h3v2" fill="none" stroke="#333"/></svg>
          <svg class="w-4 h-4" viewBox="0 0 16 16"><g fill="#eee" stroke="#444" stroke-width="1.200"><path d="M1 4l3 6M9 9l2-1M15 8c0-3-1-5-3-5M1 4l2-1" fill="none"/><circle cx="6" cy="11" r="2.500"/><circle cx="12.500" cy="9" r="2.300"/></g></svg>
          <svg class="w-4 h-4" viewBox="0 0 16 16"><circle cx="8" cy="6" r="2.500" fill="#cfe6f8" stroke="#1a66b3" stroke-width="1.200"/><path d="M8 9v4" stroke="#1a66b3" stroke-width="2"/></svg>
          <svg class="w-4 h-4" viewBox="0 0 16 16"><path d="M1 3h13v10H1z" fill="#f3f3f3" stroke="#222" stroke-width="1.500" stroke-dasharray="2 1"/><path d="M7 8h5l2 2v4H8z" fill="#999" stroke="#222"/></svg>
          <svg class="w-4 h-4" viewBox="0 0 16 16"><path d="M1 6l6-4 7 3v8H1zM1 6h9v8M4 6v8M7 6v8M1 10h9" fill="#eee" stroke="#555"/><path d="M1.500 14V8M5.500 14V8" stroke="#cf1f1f" stroke-width="1.300"/><circle cx="12.500" cy="7" r="2.500" fill="#ffe07a" stroke="#e0921a" stroke-width="1.200"/><path d="M12.500 10v4" stroke="#e0921a" stroke-width="2"/></svg>
          <svg class="w-4 h-4" viewBox="0 0 16 16"><path d="M4 5l3-3h6v8l-3 3H4z" fill="#bbb" stroke="#444"/><path d="M4 5h6v8M10 5l3-3M2 5v9h6M1 7h2M15 3v8" fill="none" stroke="#444"/></svg>
          <svg class="w-4 h-4" viewBox="0 0 16 16"><path d="M1 1v5M15 1v5M1 3h14M1 12h7" fill="none" stroke="#444" stroke-width="1.200"/><path d="M9 9h6v5H9z" fill="#aaa" stroke="#333"/><path d="M10.500 9V7h3v2" fill="none" stroke="#333"/></svg>
        </div>
        <svg class="ml-2 w-2 h-[9px]" viewBox="0 0 8 9"><path d="M6 1L2 4.500 6 8" fill="none" stroke="#505050" stroke-width="2"/></svg>
        <div class="flex-1 flex h-full"><div class="ml-[397px] w-[17px] h-full bg-[#cdcdcd]"></div></div>
        <svg class="w-2 h-[9px] mr-2" viewBox="0 0 8 9"><path d="M2 1l4 3.500L2 8" fill="none" stroke="#505050" stroke-width="2"/></svg>
        <svg class="w-[9px] h-[9px] mt-1 mr-1" viewBox="0 0 9 9"><path d="M6 0h2v2H6zM6 3h2v2H6zM3 3h2v2H3zM6 6h2v2H6zM3 6h2v2H3zM0 6h2v2H0z" fill="#bfbfbf"/></svg>
      </div>
    </div>
  </section>
</main>

<!-- Status bar -->
<footer class="h-[27px] shrink-0 flex items-center pb-[2px] pl-[5px] pr-[21px] text-black whitespace-nowrap">
  <p class="w-[842px]">Klikněte pro výběr, stiskněte klávesu TAB pro alternativy, CTRL pro přidání, SHIFT pro odebrání prvků.</p>
  <svg class="w-4 h-4" viewBox="0 0 16 16"><path d="M5 3l3-2 4 1v5l-4 1-3-1z" fill="#8fd07c" stroke="#2d7a22"/><path d="M1 8l3-2 4 1v7l-4 1-3-2z" fill="#bfe0f8" stroke="#1a66b3"/><path d="M12 8v7M10.500 6v3h4V6" fill="none" stroke="#444" stroke-width="1.300"/></svg>
  <div class="relative ml-2 w-[204px] h-[18px]">
    <select aria-label="Pracovní sady" class="appearance-none w-full h-full bg-white"><option></option></select>
    <svg class="absolute right-[4px] top-[7px] w-[9px] h-[6px] pointer-events-none" viewBox="0 0 9 6"><path d="M.5 .5l4 4 4-4" fill="none" stroke="#999"/></svg>
  </div>
  <svg class="ml-[9px] w-4 h-4" viewBox="0 0 16 16"><path d="M4 1h9v4l-3 1H7V4H4zM8 6v3" fill="#ddd" stroke="#8a8a8a" stroke-width="1.300"/><path d="M1 15c1-4 3-6 5-6h3l2 2-4 4z" fill="#8f8f8f"/></svg>
  <span class="ml-[2px] w-[34px]">:0</span>
  <svg class="w-[17px] h-4" viewBox="0 0 17 16"><path d="M1 1h15v14H1z" fill="#f2f4f6" stroke="#333b47" stroke-width="1.300"/><path d="M1 2.500h15" stroke="#333b47" stroke-width="2"/><path d="M3 6h3M5 7v6M7 8h6M7 10.500h6M7 13h6" stroke="#333b47"/></svg>
  <svg class="ml-[10px] w-4 h-4" viewBox="0 0 16 16"><path d="M1 1h14v14H9l-3-3H1z" fill="#8f8f8f"/><path d="M2 9c3 0 6 0 7 3M7 10l2 2 2-2" fill="none" stroke="#ddd" stroke-width="1.300"/></svg>
  <div class="relative ml-[9px] w-[204px] h-[18px]">
    <select aria-label="Varianta návrhu" class="appearance-none w-full h-full pl-[2px] bg-white text-[#777]"><option>Hlavní model</option></select>
    <svg class="absolute right-[4px] top-[7px] w-[9px] h-[6px] pointer-events-none" viewBox="0 0 9 6"><path d="M.5 .5l4 4 4-4" fill="none" stroke="#999"/></svg>
  </div>
  <div class="ml-auto flex items-center gap-[10px]">
    <svg class="w-4 h-4" viewBox="0 0 16 16"><rect x=".9" y="1.900" width="6.500" height="4.500" rx="2.200" fill="none" stroke="#d8a016" stroke-width="1.800"/><rect x="8.500" y="1.900" width="6.500" height="4.500" rx="2.200" fill="none" stroke="#d8a016" stroke-width="1.800"/><path d="M5 4h6" stroke="#b88208" stroke-width="1.500"/><use href="#pointer" x="6" y="4" width="8" height="12"/></svg>
    <svg class="w-4 h-4" viewBox="0 0 16 16"><path d="M1 9l7-7v7zM1 13h9" fill="#cfe6f8" stroke="#1a66b3" stroke-width="1.300"/><path d="M9 1l6 6M15 1L9 7" stroke="#cf1f1f" stroke-width="2"/><use href="#pointer" x="8" y="5" width="7" height="11"/></svg>
    <svg class="w-4 h-4" viewBox="0 0 16 16"><path d="M2 1h8v2H9v4l2 2v2H1V9l2-2V3H2zM6 11v4" fill="#f6a15a" stroke="#b9501a" stroke-width="1.100"/><use href="#pointer" x="8" y="4" width="8" height="12"/></svg>
    <svg class="w-4 h-4" viewBox="0 0 16 16"><path d="M1 3l8-2v12l-8 2z" fill="#bfe0f8" stroke="#1a66b3" stroke-width="1.200"/><path d="M9 1l6 6M15 1L9 7" stroke="#cf1f1f" stroke-width="2"/><use href="#pointer" x="8" y="5" width="7" height="11"/></svg>
    <svg class="w-4 h-4" viewBox="0 0 16 16"><path d="M5 0v11M0 5.500h10" stroke="#111" stroke-width="1.300" stroke-dasharray="2 1"/><path d="M3.500 2L5 0l1.500 2zM3.500 9L5 11l1.500-2zM2 4L0 5.500 2 7zM8 4l2 1.500L8 7z" fill="#111"/><use href="#pointer" x="8" y="4" width="8" height="12"/></svg>
    <svg class="w-4 h-4" viewBox="0 0 16 16"><circle cx="8" cy="8" r="5.500" fill="none" stroke="#a3a3a3" stroke-width="3" stroke-dasharray="3 1.300"/></svg>
    <span class="flex items-center -ml-[2px] mr-[63px]"><svg class="w-[17px] h-4" viewBox="0 0 17 16"><path d="M1 1h15v2l-6 6v6H7V9L1 3z" fill="url(#light)" stroke="#444c58" stroke-width="1.300"/></svg><span class="text-[#24476e]">:0</span></span>
  </div>
  <span class="w-px h-5 bg-[#dddddd]"></span>
</footer>

<script>
  // One char per level: | line, t branch, l last branch, + - expander, F first, _ last expander
  const tree = [
    ["F", "Pohledy (all)", "views"],
    ["|+", "Konstrukční půdorysy (Structural Plan)"],
    ["|-", "Půdorysy (Floor Plan)"],
    ["||t", "Level6"], ["||t", "Level 1"], ["||t", "Level 2"], ["||l", "Site"],
    ["|-", "Půdorysy stropů (Ceiling Plan)"],
    ["||t", "Level6"], ["||t", "Level 1"], ["||l", "Level 2"],
    ["|+", "3D pohledy (3D View)"],
    ["|_", "Pohledy (Building Elevation)"],
    ["| t", "East"], ["| t", "North"], ["| t", "South"], ["| l", "West"],
    ["t", "Legendy", "legend"],
    ["+", "Výkazy/Množství (všechny)", "schedule"],
    ["t", "Výkresy (all)", "sheet"],
    ["-", "Rodiny", "family"],
    ["|+", "Dveře"], ["|+", "Elektroinstalační trubky"], ["|+", "Kabelové lávky"],
    ["|+", "Konstrukční rámová konstrukce"], ["|+", "Konstrukční sloupy"], ["|+", "Konstrukční základy"],
    ["|+", "Obecné modely"], ["|-", "Objem"], ["||_", "BldgMass"], ["|| l", "BldgMass"],
    ["|+", "Obvodové pláště"], ["|+", "Ohebná potrubí"], ["|+", "Ohebné trubky"], ["|+", "Okna"],
    ["|+", "Panely obvodového pláště"], ["|+", "Podhledy"], ["|+", "Podlahy"], ["|+", "Položky detailu"],
    ["|+", "Potrubí"], ["|+", "Pozemek"], ["|+", "Profily"], ["|+", "Profily dělení"],
    ["|+", "Příčle obvodového pláště"], ["|+", "Rampy"], ["|+", "Schodiště"]
  ];

  const treeIcons = {
    views: '<path d="M1 5V1h4M11 1h4v4M15 11v4h-4M5 15H1v-4" fill="none" stroke="#333b47" stroke-width="1.200"/><path d="M4 6l2-2h6v6l-2 2H4z" fill="#fff" stroke="#333b47"/>',
    legend: '<path d="M.7 1h14.600v14H.7z" fill="#f2f4f6" stroke="#333b47" stroke-width="1.300"/><path d="M1 2.500h14" stroke="#6b7482" stroke-width="3"/><path d="M3 6h3v3H3zM3 11h3v2H3z" fill="#555"/><path d="M8 7h6M8 9h6M8 12h6" stroke="#333b47"/>',
    schedule: '<path d="M.7 3h14.600v11H.7z" fill="#f2f4f6" stroke="#333b47" stroke-width="1.300"/><path d="M1 4h14" stroke="#333b47" stroke-width="2"/><path d="M1 8h14M1 11h14M5 5v9" stroke="#888"/>',
    sheet: '<path d="M1 2h10l4 4v8H1z" fill="#f2f4f6" stroke="#333b47" stroke-width="1.300"/><path d="M11 2v4h4M3 5h6v3H6v3H3zM10 8v3h3" fill="none" stroke="#6b7482"/>',
    family: '<path d="M1 2h7v6H1zM10 2h5v12H3v-4h7z" fill="#f2f4f6" stroke="#333b47" stroke-width="1.400"/>'
  };

  function guides(codes, root) {
    let dots = "", boxes = "";
    [...codes].forEach((c, i) => {
      const x = i * 20 + 8.5;
      if (c === "|" || c === "t" || c === "+" || c === "-") dots += `M${x} 0v18`;
      if (c === "l" || c === "_") dots += `M${x} 0v10`;
      if (c === "F") dots += `M${x} 10v8`;
      if (!"| ".includes(c)) dots += `M${x} 10.5h${root ? 11 : 15}`;
      if ("+-_F".includes(c)) {
        boxes += `<rect x="${x - 4}" y="6.500" width="8" height="8" fill="#f4f4f4" stroke="#919191"/><path d="M${x - 2} 10.500h5${c === "+" ? `M${x + .5} 8v5` : ""}" stroke="#2f4f9f"/>`;
      }
    });
    return `<svg class="h-[18px] shrink-0" width="${codes.length * 20 + (root ? 0 : 6)}" height="18"><path d="${dots}" stroke="#999" stroke-dasharray="1 1" fill="none"/>${boxes}</svg>`;
  }

  document.getElementById("tree").innerHTML = tree.map(([codes, name, icon], i) =>
    `<li class="flex items-center h-[18px]">${guides(codes, !!icon)}` +
    (icon ? `<svg class="w-4 h-4 shrink-0" viewBox="0 0 16 16">${treeIcons[icon]}</svg>` : "") +
    `<span class="h-[18px] leading-[16px] ${icon ? "ml-[3px] px-[3px]" : ""} ${i === 0 ? "bg-[#e0e0e0]" : ""}">${name}</span></li>`
  ).join("");

  // Type: t text, f focused text, b button, c checkbox; capitals are disabled
  const props = [
    ["Grafika"],
    ["Měřítko pohledu", "f", "Vlastní"], ["Hodnota měřítka    1:", "t", "96"], ["Úroveň detailu", "t", "Střední"],
    ["Viditelnost součástí", "t", "Zobrazit originál"], ["Přepsání viditelnosti/zobra...", "b", "Upravit..."],
    ["Možnosti grafického zobra...", "b", "Upravit..."], ["Disciplína", "t", "Architektura"],
    ["Zobrazit skryté čáry", "t", "Podle disciplíny"], ["Výchozí styl zobrazení anal...", "t", "Žádná"],
    ["Trajektorie slunce", "c"],
    ["Rozsah"],
    ["Ořezat pohled", "c"], ["Zobrazit ořezovou oblast", "c"], ["Ořezání poznámky", "c"], ["Zadní ořezání aktivní", "c"],
    ["Odsazení zadního ořezání", "T", "304.8000"], ["Orientovaný kvádr", "t", "Žádná"], ["Ořezový kvádr", "c"],
    ["Kamera"],
    ["Nastavení rendrování", "b", "Upravit..."], ["Uzamknutá orientace", "C"], ["Režim promítání", "t", "Ortografický"],
    ["Výška oka", "t", "57.4863"], ["Cílová výška", "t", "12.5000"], ["Poloha kamery", "T", "Přizpůsobená"],
    ["Identifikační data"],
    ["Šablona pohledu", "b", "&lt;Žádné&gt;"], ["Název pohledu", "t", "{3D}"], ["Závislost", "T", "Nezávislé"],
    ["Název na výkresu", "t", ""],
    ["Fázování"],
    ["Filtr fáze", "t", "Show Previous + New"], ["Fáze", "t", "Project Completion"]
  ];

  function valueCell(type, value, id) {
    if (type === "b") return `<button id="${id}" class="block w-full h-[17px] leading-[14px] bg-[#e1e1e1] border border-b-2 border-r-2 border-[#adadad]">${value}</button>`;
    if (type === "c") return `<input id="${id}" type="checkbox" class="appearance-none block w-[13px] h-[13px] ml-[2px] mt-[3px] border border-[#333] bg-white">`;
    if (type === "C") return `<input id="${id}" type="checkbox" disabled class="appearance-none block w-[13px] h-[13px] ml-[2px] mt-[3px] border border-[#ccc] bg-white">`;
    if (type === "T") return `<input id="${id}" type="text" disabled value="${value}" class="block w-full h-[17px] pb-px pl-px text-[#6d6d6d]">`;
    if (type === "f") return `<input id="${id}" type="text" value="${value}" class="block w-full h-[17px] pb-px border border-black">`;
    return `<input id="${id}" type="text" value="${value}" class="block w-full h-[17px] pb-px pl-px">`;
  }

  document.getElementById("props").innerHTML = props.map(([label, type, value], i) => {
    if (!type) {
      return `<tr class="h-[18px] bg-[#dadada]"><th colspan="3" class="p-0 pl-[2px] font-normal text-left"><div class="flex items-center justify-between pr-[6px]">${label}<svg class="w-[7px] h-[9px]" viewBox="0 0 7 9"><path d="M1 4l2.500-2.500L6 4M1 8l2.500-2.500L6 8" fill="none" stroke="#000" stroke-width="1.300"/></svg></div></th></tr>`;
    }
    const dim = type === "T" || type === "C" ? "text-[#6d6d6d]" : "";
    return `<tr class="h-[18px] border-b border-dotted border-[#777]"><th class="p-0 pl-2 font-normal text-left ${dim}"><label for="p${i}" class="block h-[17px] leading-[15px] whitespace-pre">${label}</label></th>` +
      `<td class="p-0 pl-px border-l border-dotted border-[#777] h-[18px]">${valueCell(type, value, "p" + i)}</td><td class="p-0 border-x border-dotted border-[#777]"></td></tr>`;
  }).join("");

  // Facade trusses: post, bowed outer chord, cross bracing
  const bottoms = [821.7, 801.3, 780.3, 760, 739, 718.3, 697.3, 676.7, 656.3, 629];
  let lines = "", nodes = "";
  const dot = (x, y, r) => { nodes += `M${x - r} ${y - r}h${2 * r}v${2 * r}h${-2 * r}z`; };
  bottoms.forEach((bottom, i) => {
    const x = 1192.3 + i * 50.38;
    const top = 747.5 - i * 29.17;
    const apex = i === 9 ? 563.3 : 792.3 - i * 25;
    const post = [0, 1, 2, 3, 4, 5, 6].map(k => top + (bottom - top) * k / 6);
    const outer = [[0, top], [4.5, top + (apex - top) / 3], [9, top + (apex - top) * 2 / 3], [13, apex],
                   [9, apex + (bottom - apex) / 3], [4.5, apex + (bottom - apex) * 2 / 3], [0, bottom]];
    lines += `M${x} ${top}V${bottom}M` + outer.map(p => `${x + p[0]} ${p[1]}`).join("L");
    for (let k = 1; k < 6; k++) {
      const p = outer[k];
      lines += `M${x} ${post[k - 1]}L${x + p[0]} ${p[1]}L${x} ${post[k + 1]}M${x} ${post[k]}L${x + p[0]} ${p[1]}`;
      dot(x + p[0], p[1], 2);
      dot(x, post[k], i === 0 ? 2.2 : 1.5);
    }
    dot(x, top, 2.2);
    dot(x, bottom, 2);
  });
  document.getElementById("trussLines").setAttribute("d", lines);
  document.getElementById("trussNodes").setAttribute("d", nodes);
</script>
</body>
</html>
